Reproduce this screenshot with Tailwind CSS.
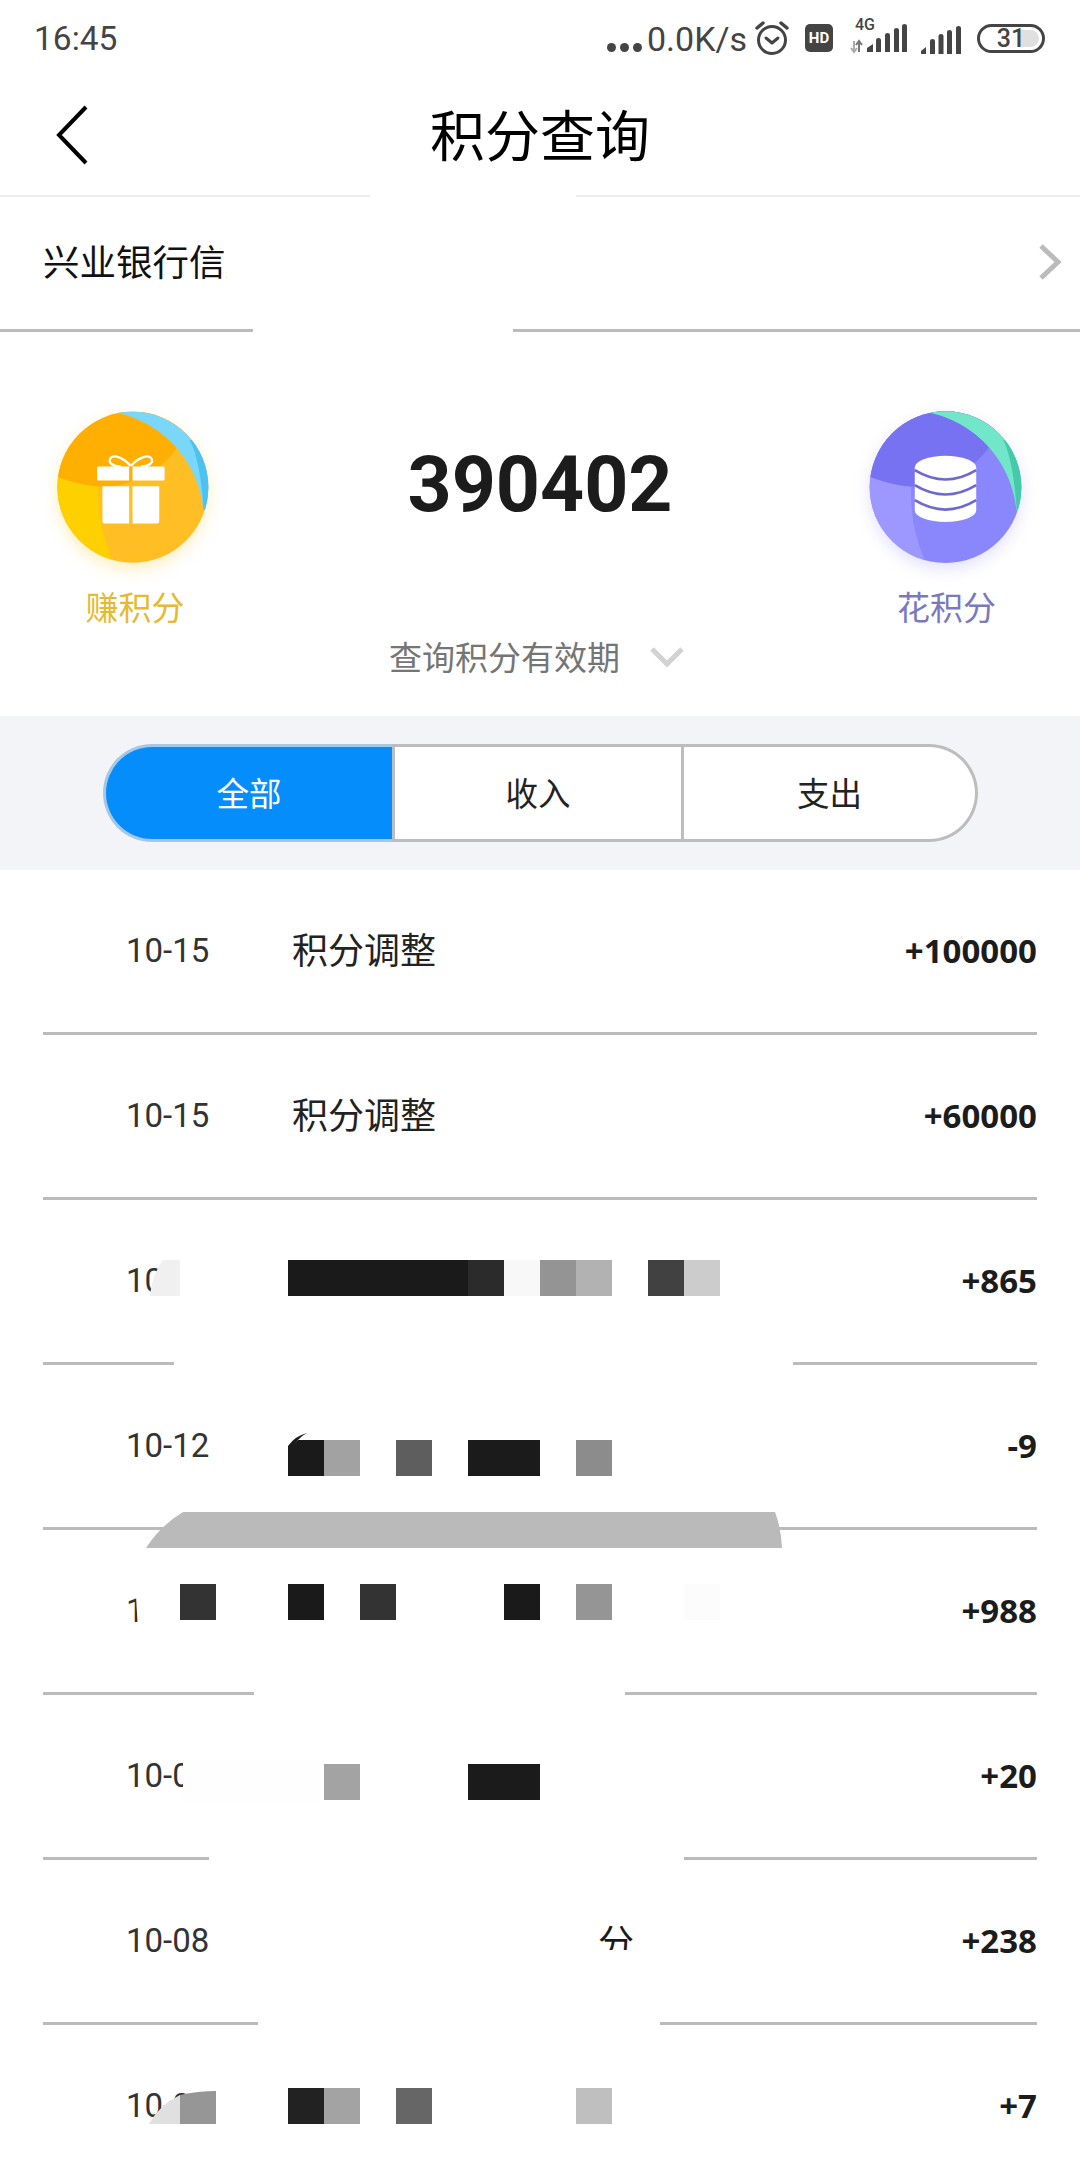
<!DOCTYPE html>
<html lang="zh">
<head>
<meta charset="utf-8">
<script src="https://cdn.jsdelivr.net/npm/@tailwindcss/browser@4"></script>
</head>
<body class="bg-white">
<div class="relative w-[1080px] h-[2160px] overflow-hidden bg-white font-['Noto_Sans_CJK_SC','Noto_Sans',sans-serif]">

  <!-- status bar -->
  <div class="flex h-[76px] items-center pl-[34px] pr-[35px] text-[#444] font-['Roboto',sans-serif]">
    <span class="text-[33.5px] leading-none mt-[1px]">16:45</span>
    <div class="ml-auto flex items-center">
      <div class="flex gap-[4px] mt-[18px]">
        <span class="w-[9px] h-[9px] rounded-full bg-[#444]"></span>
        <span class="w-[9px] h-[9px] rounded-full bg-[#444]"></span>
        <span class="w-[9px] h-[9px] rounded-full bg-[#444]"></span>
      </div>
      <span class="ml-[5px] text-[34px] leading-none mt-[1px] w-[103px]">0.0K/s</span>
      <svg class="ml-[5px]" width="34" height="36" viewBox="0 0 34 36" fill="none" stroke="#444" stroke-linecap="round">
        <circle cx="17" cy="20" r="13.5" stroke-width="3"/>
        <path d="M11 18l6 5 6-5" stroke-width="3" stroke-linejoin="round"/>
        <path d="M2 8l6-5M32 8l-6-5" stroke-width="3.5"/>
      </svg>
      <div class="ml-[16px] flex h-[28px] w-[28px] items-center justify-center rounded-[5px] bg-[#444] text-[15px] font-bold leading-none text-white">HD</div>
      <div class="relative ml-[17px] h-[34px] w-[57px]">
        <span class="absolute left-[5px] top-[-4px] text-[16px] font-medium leading-none">4G</span>
        <svg class="absolute left-0 top-0" width="57" height="34" viewBox="0 0 57 34">
          <path d="M4 20v11M1 27l3 4 3-4" fill="none" stroke="#aaa" stroke-width="2"/>
          <path d="M9 31V20M6 24l3-4 3 4" fill="none" stroke="#777" stroke-width="2"/>
          <path d="M17 31v-4l6-4v8zM26 31V19q0-2 2.500-2t2.500 2v12zM35 31V14q0-2 2.500-2t2.500 2v17zM44 31V9q0-2 2.500-2t2.500 2v22zM52 31V5q0-2 2.500-2t2.500 2v26z" fill="#444"/>
        </svg>
      </div>
      <svg class="ml-[14px] mt-[4px]" width="40" height="28" viewBox="0 0 40 28" fill="#444">
        <path d="M0 28v-3l5-4v7zM9 28V15q0-2 2.500-2t2.500 2v13zM17.500 28V10q0-2 2.500-2t2.500 2v18zM26 28V6q0-2 2.500-2t2.500 2v22zM35 28V2q0-2 2.500-2t2.500 2v26z"/>
      </svg>
      <div class="relative ml-[16px] mt-[1px] flex h-[29px] w-[68px] items-center justify-center overflow-hidden rounded-full border-[3px] border-[#444]">
        <span class="absolute right-[3px] top-[3px] h-[17px] w-[21px] rounded-r-full bg-[#e0e0e0]"></span>
        <span class="relative text-[25px] font-medium leading-none text-[#444]">31</span>
      </div>
    </div>
  </div>

  <!-- title bar -->
  <div class="relative flex h-[121px] items-center justify-center border-b-2 border-[#ececec]">
    <svg class="absolute left-[56px] top-[29px]" width="32" height="60" viewBox="0 0 32 60" fill="none" stroke="#000" stroke-width="4">
      <path d="M30 2L3 30l27 28"/>
    </svg>
    <h1 class="mb-[7px] text-[55px] font-normal leading-none text-black">积分查询</h1>
  </div>

  <!-- card row -->
  <div class="relative flex h-[135px] items-center border-b-[3px] border-[#bbb] pl-[43px]">
    <div class="mb-[5px] h-[46px] w-[184px] overflow-hidden whitespace-nowrap text-[36.500px] leading-[46px] text-[#111]">兴业银行信用卡</div>
    <svg class="absolute left-[1038px] top-[47px]" width="24" height="36" viewBox="0 0 24 36" fill="none" stroke="#bbb" stroke-width="5">
      <path d="M3 2l17 16L3 34"/>
    </svg>
  </div>

  <!-- balance -->
  <div class="flex h-[384px] items-start justify-between px-[55px] pt-[78px]">
    <div class="flex w-[157px] flex-col items-center">
      <svg class="drop-shadow-[0_6px_8px_rgba(255,200,40,0.3)]" width="157" height="157" viewBox="165 60 470 470">
        <defs>
          <clipPath id="g1"><circle cx="398" cy="291" r="226"/></clipPath>
        </defs>
        <g clip-path="url(#g1)">
          <rect x="165" y="60" width="470" height="470" fill="#ffbe24"/>
          <path d="M160 255L175 262C230 280 270 290 320 290C400 285 490 240 535 165L560 60H160z" fill="#ffae02"/>
          <path d="M160 255L175 262C215 276 255 286 295 290C290 360 310 450 345 530H160z" fill="#ffd000"/>
          <path d="M345 60V68C450 85 590 180 610 360L640 360V60z" fill="#7ad7f9"/>
          <path d="M568 150C590 190 605 270 610 360L640 340V150z" fill="#4cc2f0"/>
        </g>
        <path d="M392 228C372 204 342 192 332 203C320 218 340 229 362 229M392 228C412 204 442 192 452 203C464 218 444 229 422 229" fill="none" stroke="#fff" stroke-width="7"/>
        <path d="M295 229H387V271H295Q291 271 291 267V233Q291 229 295 229zM397 229H489Q493 229 493 233V267Q493 271 489 271H397zM307 288H387V400H313Q307 400 307 394zM397 288H477V394Q477 400 471 400H397z" fill="#fff"/>
      </svg>
      <span class="mt-[19px] ml-[3px] text-[33px] leading-[40px] text-[#e6b931]">赚积分</span>
    </div>
    <div class="flex flex-1 flex-col items-center pt-[37px]">
      <span class="font-['Roboto',sans-serif] text-[77px] font-bold leading-[76px] text-[#1c1c1c]">390402</span>
      <div class="mt-[113px] mr-[7px] flex h-[40px] items-center">
        <span class="text-[33px] leading-[40px] text-[#757575]">查询积分有效期</span>
        <svg class="ml-[30px] mt-[2px]" width="34" height="20" viewBox="0 0 34 20" fill="none" stroke="#d2d2d2" stroke-width="5"><path d="M2 2l15 15L32 2"/></svg>
      </div>
    </div>
    <div class="flex w-[157px] flex-col items-center">
      <svg class="drop-shadow-[0_6px_8px_rgba(125,120,250,0.22)]" width="157" height="157" viewBox="565 60 470 470">
        <defs>
          <clipPath id="p1"><circle cx="797" cy="291" r="227"/></clipPath>
        </defs>
        <g clip-path="url(#p1)">
          <rect x="565" y="60" width="470" height="470" fill="#8a86fb"/>
          <path d="M560 255L575 262C630 280 660 290 700 290C780 285 890 240 935 158L960 60H560z" fill="#7672f1"/>
          <path d="M560 255L575 262C615 276 650 286 695 290C690 360 705 450 745 530H560z" fill="#9c98ff"/>
          <path d="M745 60V68C850 85 990 180 1010 360L1040 360V60z" fill="#72e6c8"/>
          <path d="M970 150C990 190 1005 270 1010 360L1040 340V150z" fill="#46c9a8"/>
        </g>
        <path d="M705 232A92 35 0 0 1 889 232V360A92 35 0 0 1 705 360z" fill="#fff"/>
        <path d="M705 240Q797 296 889 240M705 285Q797 341 889 285M705 330Q797 386 889 330" fill="none" stroke="#6d69cf" stroke-width="8"/>
      </svg>
      <span class="mt-[19px] text-[33px] leading-[40px] text-[#7a78c0]">花积分</span>
    </div>
  </div>

  <!-- tabs -->
  <div class="h-[154px] bg-[#f3f4f8] pl-[103px] pt-[28px]">
    <div class="flex h-[98px] w-[875px] text-[32.500px] text-[#222]">
      <div class="flex w-[289px] items-center justify-center rounded-l-full border-y-[3px] border-l-[3px] border-[#a5c8e6] bg-[#068dfc] pb-[2px] text-white">全部</div>
      <div class="flex w-[292px] items-center justify-center border-y-[3px] border-x-[3px] border-[#bdbdbd] bg-white pb-[2px]">收入</div>
      <div class="flex w-[294px] items-center justify-center rounded-r-full border-y-[3px] border-r-[3px] border-[#bdbdbd] bg-white pb-[2px]">支出</div>
    </div>
  </div>

  <!-- list -->
  <div class="pl-[43px]">
    <div class="flex h-[165px] w-[994px] items-center border-b-[3px] border-[#bbb] pl-[83px]">
      <span class="w-[166px] font-['Roboto',sans-serif] text-[33px] text-[#333]">10-15</span>
      <span class="mb-[6px] text-[36px] text-[#222]">积分调整</span>
      <span class="ml-auto font-['Noto_Sans',sans-serif] text-[33px] font-bold text-[#1c1c1c]">+100000</span>
    </div>
    <div class="flex h-[165px] w-[994px] items-center border-b-[3px] border-[#bbb] pl-[83px]">
      <span class="w-[166px] font-['Roboto',sans-serif] text-[33px] text-[#333]">10-15</span>
      <span class="mb-[6px] text-[36px] text-[#222]">积分调整</span>
      <span class="ml-auto font-['Noto_Sans',sans-serif] text-[33px] font-bold text-[#1c1c1c]">+60000</span>
    </div>
    <div class="flex h-[165px] w-[994px] items-center border-b-[3px] border-[#bbb] pl-[83px]">
      <span class="w-[166px] font-['Roboto',sans-serif] text-[33px] text-[#333]">10-13</span>
      <span class="ml-auto font-['Noto_Sans',sans-serif] text-[33px] font-bold text-[#1c1c1c]">+865</span>
    </div>
    <div class="flex h-[165px] w-[994px] items-center border-b-[3px] border-[#bbb] pl-[83px]">
      <span class="w-[166px] font-['Roboto',sans-serif] text-[33px] text-[#333]">10-12</span>
      <span class="ml-auto font-['Noto_Sans',sans-serif] text-[33px] font-bold text-[#1c1c1c]">-9</span>
    </div>
    <div class="flex h-[165px] w-[994px] items-center border-b-[3px] border-[#bbb] pl-[83px]">
      <span class="w-[166px] font-['Roboto',sans-serif] text-[33px] text-[#333]">10-10</span>
      <span class="ml-auto font-['Noto_Sans',sans-serif] text-[33px] font-bold text-[#1c1c1c]">+988</span>
    </div>
    <div class="flex h-[165px] w-[994px] items-center border-b-[3px] border-[#bbb] pl-[83px]">
      <span class="w-[166px] font-['Roboto',sans-serif] text-[33px] text-[#333]">10-09</span>
      <span class="ml-auto font-['Noto_Sans',sans-serif] text-[33px] font-bold text-[#1c1c1c]">+20</span>
    </div>
    <div class="flex h-[165px] w-[994px] items-center border-b-[3px] border-[#bbb] pl-[83px]">
      <span class="w-[166px] font-['Roboto',sans-serif] text-[33px] text-[#333]">10-08</span>
      <span class="ml-auto font-['Noto_Sans',sans-serif] text-[33px] font-bold text-[#1c1c1c]">+238</span>
    </div>
    <div class="flex h-[165px] w-[994px] items-center border-b-[3px] border-[#bbb] pl-[83px]">
      <span class="w-[166px] font-['Roboto',sans-serif] text-[33px] text-[#333]">10-07</span>
      <span class="ml-auto font-['Noto_Sans',sans-serif] text-[33px] font-bold text-[#1c1c1c]">+7</span>
    </div>
  </div>

  <!-- redaction layer that lies over the page -->
  <!-- gaps in the rules -->
  <div class="absolute left-[370px] top-[194px] h-[4px] w-[206px] bg-white"></div>
  <div class="absolute left-[253px] top-[327px] h-[7px] w-[260px] bg-white"></div>
  <div class="absolute left-[174px] top-[1360px] h-[7px] w-[619px] bg-white"></div>
  <div class="absolute left-[254px] top-[1690px] h-[7px] w-[371px] bg-white"></div>
  <div class="absolute left-[209px] top-[1855px] h-[7px] w-[475px] bg-white"></div>
  <div class="absolute left-[258px] top-[2020px] h-[7px] w-[402px] bg-white"></div>

  <!-- row 3 -->
  <svg class="absolute left-[145px] top-[1260px]" width="40" height="36" viewBox="0 0 40 36"><path d="M18 0Q7 15 5 36H35V0z" fill="#f0f0f0"/></svg>
  <div class="absolute left-[180px] top-[1258px] h-[40px] w-[40px] bg-white"></div>
  <div class="absolute left-[288px] top-[1260px] flex h-[36px]">
    <span class="w-[180px] bg-[#1a1a1a]"></span>
    <span class="w-[36px] bg-[#2b2b2b]"></span>
    <span class="w-[36px] bg-[#f8f8f8]"></span>
    <span class="w-[36px] bg-[#949494]"></span>
    <span class="w-[36px] bg-[#b2b2b2]"></span>
    <span class="w-[36px] bg-white"></span>
    <span class="w-[36px] bg-[#414141]"></span>
    <span class="w-[36px] bg-[#ccc]"></span>
  </div>

  <!-- row 4 -->
  <div class="absolute left-[288px] top-[1440px] flex h-[36px]">
    <span class="w-[36px] bg-[#1a1a1a]"></span>
    <span class="w-[36px] bg-[#a2a2a2]"></span>
    <span class="w-[36px] bg-white"></span>
    <span class="w-[36px] bg-[#5e5e5e]"></span>
    <span class="w-[36px] bg-white"></span>
    <span class="w-[72px] bg-[#1b1b1b]"></span>
    <span class="w-[36px] bg-white"></span>
    <span class="w-[36px] bg-[#8c8c8c]"></span>
  </div>
  <svg class="absolute left-[286px] top-[1432px]" width="24" height="20" viewBox="0 0 24 20">
    <path d="M2 8H12L2 16z" fill="#fff"/>
    <path d="M21 1Q9 4 2 14V18L12 8Q15 4 21 1z" fill="#1a1a1a"/>
  </svg>

  <!-- grey band -->
  <svg class="absolute left-[146px] top-[1512px]" width="636" height="36" viewBox="0 0 636 36"><path d="M0 36Q14 14 37 0H629Q635 16 636 36z" fill="#bababa"/></svg>

  <!-- row 5 -->
  <svg class="absolute left-[130px] top-[1596px]" width="100" height="34" viewBox="0 0 100 34"><path d="M6 0L8 34H100V0z" fill="#fff"/></svg>
  <div class="absolute left-[180px] top-[1584px] flex h-[36px]">
    <span class="w-[36px] bg-[#333]"></span>
    <span class="w-[72px] bg-white"></span>
    <span class="w-[36px] bg-[#1a1a1a]"></span>
    <span class="w-[36px] bg-white"></span>
    <span class="w-[36px] bg-[#333]"></span>
    <span class="w-[108px] bg-white"></span>
    <span class="w-[36px] bg-[#1a1a1a]"></span>
    <span class="w-[36px] bg-white"></span>
    <span class="w-[36px] bg-[#959595]"></span>
    <span class="w-[72px] bg-white"></span>
    <span class="w-[36px] bg-[#fcfcfc]"></span>
  </div>

  <!-- row 6 -->
  <div class="absolute left-[183px] top-[1760px] h-[44px] w-[141px] bg-[#fefefe]"></div>
  <div class="absolute left-[324px] top-[1764px] flex h-[36px]">
    <span class="w-[36px] bg-[#a3a3a3]"></span>
    <span class="w-[108px] bg-white"></span>
    <span class="w-[72px] bg-[#1b1b1b]"></span>
  </div>

  <!-- row 7 fragment -->
  <div class="absolute left-[598px] top-[1922px] h-[28px] w-[36px] overflow-hidden text-[36px] leading-[36px] text-[#1a1a1a]">分</div>

  <!-- row 8 -->
  <svg class="absolute left-[149px] top-[2091px]" width="67" height="33" viewBox="0 0 67 33">
    <path d="M0 33Q10 14 31 4V33z" fill="#e0e0e0"/>
    <path d="M31 4Q49 0 67 0V33H31z" fill="#969696"/>
  </svg>
  <div class="absolute left-[288px] top-[2088px] flex h-[36px]">
    <span class="w-[36px] bg-[#222]"></span>
    <span class="w-[36px] bg-[#a3a3a3]"></span>
    <span class="w-[36px] bg-white"></span>
    <span class="w-[36px] bg-[#666]"></span>
    <span class="w-[144px] bg-white"></span>
    <span class="w-[36px] bg-[#bfbfbf]"></span>
  </div>
</div>
</body>
</html>
